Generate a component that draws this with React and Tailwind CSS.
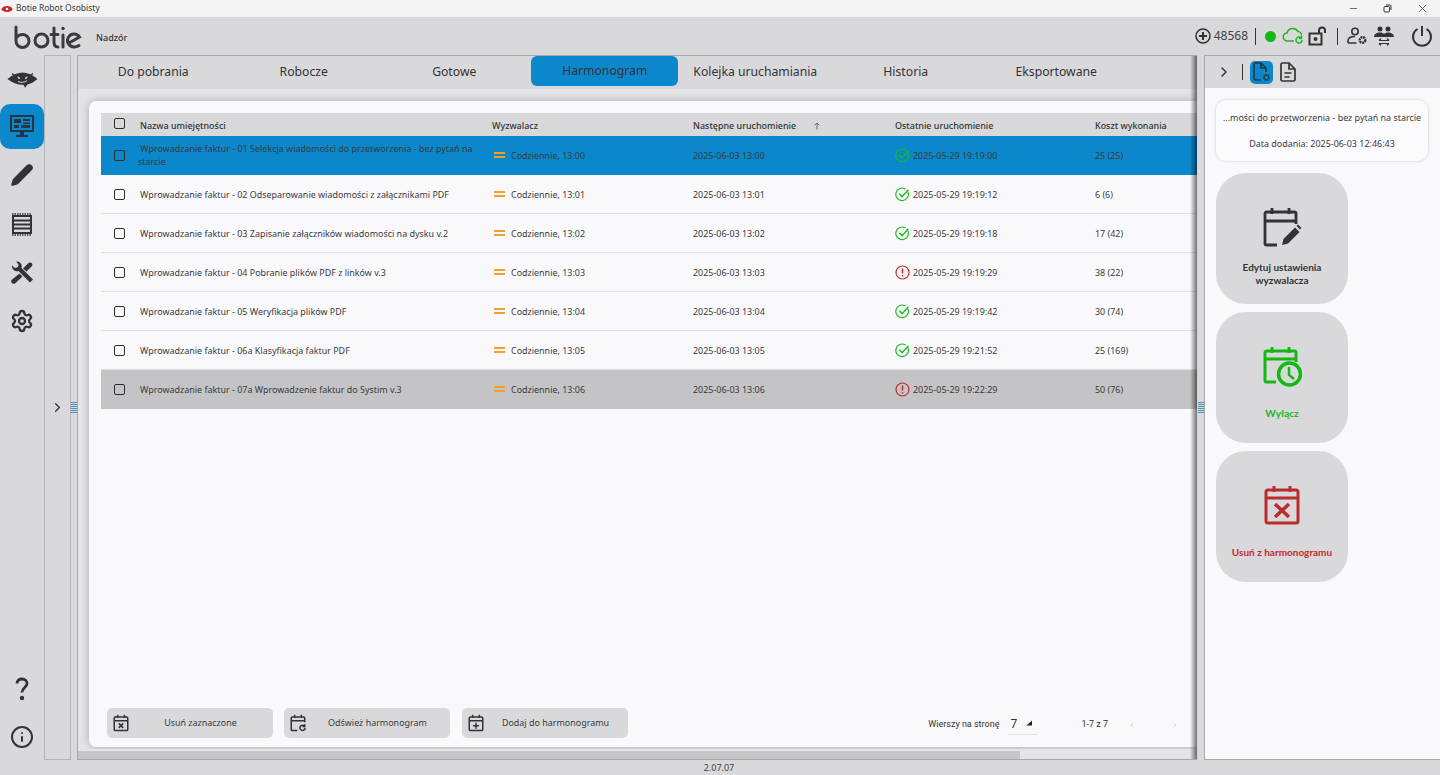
import React from "react";
import { ChevronRight, ChevronLeft, Minus, X, Settings, Info, Pencil } from "lucide-react";

const rows = [
  { name: "Wprowadzanie faktur - 01 Selekcja wiadomości do przetworzenia - bez pytań na starcie", time: "13:00", last: "2025-05-29 19:19:00", ok: true, cost: "25 (25)", state: "active" },
  { name: "Wprowadzanie faktur - 02 Odseparowanie wiadomości z załącznikami PDF", time: "13:01", last: "2025-05-29 19:19:12", ok: true, cost: "6 (6)" },
  { name: "Wprowadzanie faktur - 03 Zapisanie załączników wiadomości na dysku v.2", time: "13:02", last: "2025-05-29 19:19:18", ok: true, cost: "17 (42)" },
  { name: "Wprowadzanie faktur - 04 Pobranie plików PDF z linków v.3", time: "13:03", last: "2025-05-29 19:19:29", ok: false, cost: "38 (22)" },
  { name: "Wprowadzanie faktur - 05 Weryfikacja plików PDF", time: "13:04", last: "2025-05-29 19:19:42", ok: true, cost: "30 (74)" },
  { name: "Wprowadzanie faktur - 06a Klasyfikacja faktur PDF", time: "13:05", last: "2025-05-29 19:21:52", ok: true, cost: "25 (169)" },
  { name: "Wprowadzanie faktur - 07a Wprowadzenie faktur do Systim v.3", time: "13:06", last: "2025-05-29 19:22:29", ok: false, cost: "50 (76)", state: "muted" },
];

const tabs = ["Do pobrania", "Robocze", "Gotowe", "Harmonogram", "Kolejka uruchamiania", "Historia", "Eksportowane"];

function Logo() {
  return (
    <svg width="68" height="24" viewBox="0 0 68 24" fill="none" stroke="#3b3b3d" strokeWidth="3" strokeLinecap="round">
      <path d="M2 2v14a6.500 6.500 0 1 0 6.500-6.500c-2.500 0-4.500 1-6 3" />
      <circle cx="27.500" cy="15.500" r="6.500" />
      <path d="M40 3v14c0 3 1.500 5 4 5M37 9.500h7" />
      <path d="M49 10v12" />
      <circle cx="49" cy="3.500" r="1.300" fill="#3b3b3d" strokeWidth="1" />
      <path d="M65 20.500c-1.500 1-3 1.500-5 1.500a6.500 6.500 0 1 1 5.500-10L55 18" />
    </svg>
  );
}

function Eye() {
  return (
    <svg width="31" height="17" viewBox="0 0 31 17">
      <path d="M.5 8C6 3.500 11 1.500 15.500 1.500S25 3.500 30.500 8c-3.500 3-7 5-10 5.500L18 16.800l-1.500-3C10.500 14 5.500 12 .5 8Z" fill="#333335" />
      <path d="M5 2.500 7.500 4.500M26 2.500 23.500 4.500" stroke="#333335" strokeWidth="1.500" />
      <path d="M10.500 5.500a2.500 2.500 0 0 1 2.500 2.500c-1 0-2.500-.5-2.500-2.500ZM20.500 5.500A2.500 2.500 0 0 0 18 8c1 0 2.500-.5 2.500-2.500Z" fill="#d9d9db" />
      <path d="M11 10.500c3 1.500 6 1 9-.8" stroke="#d9d9db" strokeWidth="1" fill="none" />
    </svg>
  );
}

function MonitorIcon() {
  return (
    <svg width="26" height="23" viewBox="0 0 26 23" fill="#28343f">
      <path d="M1 0h24v17H1V0Zm2 2v13h20V2H3Z" />
      <path d="M5 4h7v4H5zM14 4h7v2h-7zM5 10h5v3H5zM12 10h9v3h-9zM14 7.500h7V9h-7z" />
      <path d="M11 17h4v3h-4zM7 20h12v2H7z" />
    </svg>
  );
}

function ListIcon() {
  return (
    <svg width="22" height="23" viewBox="0 0 22 23" fill="none" stroke="#333335">
      <path d="M1 1h20M1 22h20" strokeWidth="1.500" strokeDasharray="1.500 1" />
      <rect x="2" y="3" width="18" height="17" strokeWidth="2" />
      <path d="M2 7.500h18M2 11.500h18M2 15.500h18" strokeWidth="2" />
    </svg>
  );
}

function ToolsIcon() {
  return (
    <svg width="24" height="24" viewBox="0 0 24 24" fill="#333335">
      <path d="M6 1.500a5 5 0 0 1 5.500 6.500L23 19.500 20 22.500 8.500 11A5 5 0 0 1 2 5.500L5 8l3-1 .5-2.500z" />
      <path d="M13 8.500 19 2.500l3 .5.500 2.500-6 6zM9.500 13.500l3 3L5 23.500c-1 .5-2 .5-3-.5s-1-2-.5-3z" />
    </svg>
  );
}

function QuestionIcon() {
  return (
    <svg width="14" height="24" viewBox="0 0 14 24" fill="none">
      <path d="M2 6.500C2 3.500 4.200 2 7 2s5 1.700 5 4.500c0 4-5 4-5 9" stroke="#333335" strokeWidth="2.800" />
      <circle cx="7" cy="21" r="2.200" fill="#333335" />
    </svg>
  );
}

// calendar base shared by the schedule icons
function Calendar({ size = 24, color = "#333335", sw = 2, open = false, children }) {
  return (
    <svg width={size} height={size} viewBox="0 0 24 24" fill="none" stroke={color} strokeWidth={sw}>
      {open ? (
        <path d="M11 22H4.500A1.500 1.500 0 0 1 3 20.500V5.500A1.500 1.500 0 0 1 4.500 4h15A1.500 1.500 0 0 1 21 5.500V11" />
      ) : (
        <rect x="3" y="4" width="18" height="18" rx="1.500" />
      )}
      <path d="M3 9h18M7.500 1v4M16.500 1v4" />
      {children}
    </svg>
  );
}

function CheckCircle() {
  return (
    <svg width="15" height="15" viewBox="0 0 15 15" fill="none" stroke="#1fb81f" strokeWidth="1.200">
      <path d="M12.900 4.800A6.300 6.300 0 1 1 10.500 2" />
      <path d="m4.300 6.800 2.800 3 6.300-7" strokeWidth="1.400" />
    </svg>
  );
}

function ErrorCircle() {
  return (
    <svg width="15" height="15" viewBox="0 0 15 15" fill="none" stroke="#c22b2b" strokeWidth="1.200">
      <circle cx="7.500" cy="7.500" r="6.500" />
      <path d="M7.500 3.500v5M7.500 10v1.500" strokeWidth="1.500" />
    </svg>
  );
}

function Checkbox() {
  return <span className="block w-[11px] h-[11px] rounded-[2px] border-[1.5px] border-[#2d2d2f]" />;
}

function Grip() {
  return (
    <div className="flex flex-col gap-px w-[6px]">
      {[0, 1, 2, 3, 4, 5].map((i) => (
        <span key={i} className="block h-px bg-[#4d93ad]" />
      ))}
    </div>
  );
}

function Row({ row }) {
  const bg =
    row.state === "active"
      ? "bg-[#0b87cb] border-transparent"
      : row.state === "muted"
        ? "bg-[#c4c4c6] border-transparent"
        : "border-[#dfdfe2]";
  return (
    <div className={`grid grid-cols-[39px_352px_201px_202px_200px_1fr] items-center h-[39px] border-b text-[#3a3a3c] ${bg}`}>
      <div className="pl-[13px]">
        <Checkbox />
      </div>
      {row.state === "active" ? (
        <div className="pr-[15px] leading-[13px] -ml-0.5">&nbsp;{row.name}</div>
      ) : (
        <div className="pr-[15px] leading-[13px] pt-px">{row.name}</div>
      )}
      <div className="flex items-center gap-[6px] pl-[2px]">
        <span className="flex flex-col gap-[2px] w-[11px]">
          <span className="block h-[2px] bg-[#f0a02c]" />
          <span className="block h-[2px] bg-[#f0a02c]" />
        </span>
        <span className="pt-px">Codziennie, {row.time}</span>
      </div>
      <div className="pt-px">2025-06-03 {row.time}</div>
      <div className="flex items-center gap-[3px]">
        {row.ok ? <CheckCircle /> : <ErrorCircle />}
        <span className="pt-px">{row.last}</span>
      </div>
      <div className="pt-px">{row.cost}</div>
    </div>
  );
}

function FooterButton({ icon, label }) {
  return (
    <button className="flex items-center w-[166px] h-[30px] rounded-[5px] bg-[#d9d9db] pl-[5px] pr-[2px] text-[#3a3a3c]">
      {icon}
      <span className="flex-1 text-center">{label}</span>
    </button>
  );
}

function Tile({ icon, label, color }) {
  return (
    <button className="flex flex-col items-center w-[132px] h-[131px] rounded-[30px] bg-[#d9d9db]">
      <div className="h-[80px] pt-[34px]">{icon}</div>
      <div className={`mt-[8px] w-[120px] h-[26px] flex items-center justify-center text-center text-[10px] leading-[13px] font-bold font-['Lato',sans-serif] ${color}`}>{label}</div>
    </button>
  );
}

export default function App() {
  return (
    <div className="h-[775px] w-[1440px] overflow-hidden flex flex-col bg-[#d9d9db] text-[#333335] font-['Noto_Sans',sans-serif]">
      {/* title bar */}
      <div className="h-[17px] bg-[#f4f4f4] flex items-center text-[8.500px] text-[#3a3a3a] shrink-0">
        <svg width="12" height="8" viewBox="0 0 12 8" className="ml-px">
          <ellipse cx="6" cy="4" rx="5.500" ry="3" fill="#c9262c" />
          <circle cx="6" cy="4" r="1.300" fill="#fff" />
        </svg>
        <span className="ml-[3px]">Botie Robot Osobisty</span>
        <div className="ml-auto flex items-center text-[#333]">
          <span className="w-[34px] flex justify-center"><Minus size={11} strokeWidth={1.500} /></span>
          <span className="w-[34px] flex justify-center">
            <svg width="9" height="9" viewBox="0 0 9 9" fill="none" stroke="#333" strokeWidth="1">
              <rect x="1" y="2.500" width="5.500" height="5.500" rx="1" />
              <path d="M3 1h4a1 1 0 0 1 1 1v4" />
            </svg>
          </span>
          <span className="w-[36px] flex justify-center"><X size={13} strokeWidth={1.300} /></span>
        </div>
      </div>

      {/* top bar */}
      <div className="h-[38px] flex items-center shrink-0 relative">
        <div className="pl-[14px] pt-px"><Logo /></div>
        <span className="ml-[14px] pt-[4px] text-[9px] font-medium">Nadzór</span>
        <div className="ml-auto flex items-center pr-[7px]">
          <svg width="16" height="16" viewBox="0 0 16 16" fill="none" stroke="#333335" strokeWidth="1.500">
            <circle cx="8" cy="8" r="7" />
            <path d="M8 4v8M4 8h8" strokeWidth="2" />
          </svg>
          <span className="ml-[3px] text-[12px] text-[#444]">48568</span>
          <span className="ml-[7px] w-px h-[17px] bg-[#333]" />
          <span className="ml-[9px] w-[11px] h-[11px] rounded-full bg-[#14b814]" />
          <svg className="ml-[6px]" width="22" height="18" viewBox="0 0 22 18" fill="none" stroke="#1fb81f" strokeWidth="1.500">
            <path d="M12 14H5.500a4 4 0 0 1-.5-8 6 6 0 0 1 11-1.500c2 0 3.500 2 3.500 4" />
            <path d="M20 13a3 3 0 1 1-1-2.200M19.500 9v2.500H17" />
          </svg>
          <svg className="ml-[4px]" width="20" height="20" viewBox="0 0 20 20" fill="none" stroke="#333335" strokeWidth="2">
            <rect x="1.500" y="7.500" width="12" height="11" />
            <circle cx="7.500" cy="13" r="1" fill="#333335" />
            <path d="M11 7V4.500a3 3 0 0 1 6 0V7" />
          </svg>
          <span className="ml-[9px] w-px h-[17px] bg-[#333]" />
          <svg className="ml-[9px]" width="20" height="18" viewBox="0 0 20 18" fill="none" stroke="#333335" strokeWidth="1.600">
            <circle cx="8" cy="4.500" r="3.200" />
            <path d="M1 16v-2C1 11 3.500 9.500 8 9.500M1 16h8.500" />
            <circle cx="15.500" cy="13" r="2.800" strokeWidth="2.400" strokeDasharray="2 .7" />
          </svg>
          <svg className="ml-[7px]" width="20" height="20" viewBox="0 0 20 20" fill="#333335">
            <circle cx="6" cy="3" r="2.500" />
            <circle cx="14" cy="3" r="2.500" />
            <path d="M0 11c0-3 2.500-4.500 6-4.500 2 0 3 .5 4 1.500 1-1 2.500-1.500 4-1.500 3 0 6 1.500 6 4.500H0Z" />
            <path d="M5 14.500h10M5 14.500l2-2M15 14.500l-2-2M5 17.500h10M5 17.500l2 2M15 17.500l-2 2" stroke="#333335" strokeWidth="1.100" fill="none" />
          </svg>
          <svg className="ml-[17px]" width="22" height="22" viewBox="0 0 22 22" fill="none" stroke="#333335" strokeWidth="2">
            <path d="M11 1v10M6.500 4a9 9 0 1 0 9 0" />
          </svg>
        </div>
      </div>

      {/* workspace */}
      <div className="h-[705px] flex shrink-0">
        {/* nav rail */}
        <div className="w-[44px] flex flex-col items-center shrink-0 pt-[11px]">
          <div className="h-[26px] flex items-center"><Eye /></div>
          <div className="mt-[12px] w-[44px] h-[45px] rounded-[10px] bg-[#0b87cb] flex items-center justify-center"><MonitorIcon /></div>
          <div className="mt-[14px] h-[24px] flex items-center"><Pencil size={24} fill="#333335" stroke="#333335" strokeWidth={1.500} /></div>
          <div className="mt-[25px] h-[24px] flex items-center"><ListIcon /></div>
          <div className="mt-[24px] h-[24px] flex items-center"><ToolsIcon /></div>
          <div className="mt-[25px] h-[24px] flex items-center"><Settings size={24} strokeWidth={2.300} /></div>
          <div className="mt-auto h-[24px] flex items-center"><QuestionIcon /></div>
          <div className="mt-[24px] mb-[11px] h-[24px] flex items-center"><Info size={24} strokeWidth={2} /></div>
        </div>

        {/* collapsed side panel */}
        <div className="w-[27px] border border-[#b4b4b6] flex items-center justify-center shrink-0">
          <ChevronRight size={15} strokeWidth={2} />
        </div>
        <div className="w-[6px] flex items-center justify-center shrink-0"><Grip /></div>

        {/* main panel */}
        <div className="relative w-[1120px] shrink-0 overflow-hidden border-l border-b border-t border-[#a8a8aa] flex flex-col bg-[#e2e2e4]">
          <div className="h-[33px] bg-[#d9d9db] flex items-center shrink-0">
            {tabs.map((t) => (
              <div key={t} className="w-[150.500px] h-[33px] flex items-center justify-center text-[12.200px]">
                {t === "Harmonogram" ? (
                  <span className="flex items-center justify-center w-[147px] h-[30px] -mt-[3px] rounded-[6px] bg-[#0b87cb]">{t}</span>
                ) : (
                  t
                )}
              </div>
            ))}
          </div>

          <div className="flex-1 min-h-0 pl-[11px] pt-[12px] pb-[2px] bg-[#e4e4e6]">
            <div className="h-full bg-[#f9f9fc] rounded-l-[7px] shadow-[0_0_8px_rgba(0,0,0,0.25)] flex flex-col pl-[12px] pt-[12px] text-[8.950px]">
              {/* table head */}
              <div className="grid grid-cols-[39px_352px_201px_202px_200px_1fr] items-center h-[23px] bg-[#d9d9db] font-medium text-[#333335] shrink-0">
                <div className="pl-[13px] -mt-[3px]"><Checkbox /></div>
                <div className="pt-[3px]">Nazwa umiejętności</div>
                <div className="pt-[3px]">Wyzwalacz</div>
                <div className="pt-[3px] flex items-center">
                  Następne uruchomienie
                  <svg className="ml-[17px]" width="8" height="8" viewBox="0 0 8 8" fill="none" stroke="#555" strokeWidth="0.800">
                    <path d="M4 7.500V1M1.500 3.500 4 1l2.500 2.500" />
                  </svg>
                </div>
                <div className="pt-[3px]">Ostatnie uruchomienie</div>
                <div className="pt-[3px]">Koszt wykonania</div>
              </div>
              {rows.map((r) => (
                <Row key={r.name} row={r} />
              ))}

              {/* bottom actions */}
              <div className="mt-auto mb-[9px] h-[30px] flex items-center pl-[6px] shrink-0">
                <FooterButton
                  label="Usuń zaznaczone"
                  icon={
                    <Calendar size={18}>
                      <path d="m9 12.500 6 6M15 12.500l-6 6" />
                    </Calendar>
                  }
                />
                <span className="w-[11px]" />
                <FooterButton
                  label="Odśwież harmonogram"
                  icon={
                    <Calendar size={18} open>
                      <path d="M21.500 18.500a3.500 3.500 0 1 1-1-2.500M21 13.500V16.500h-3" />
                    </Calendar>
                  }
                />
                <span className="w-[12px]" />
                <FooterButton
                  label="Dodaj do harmonogramu"
                  icon={
                    <Calendar size={18}>
                      <path d="M12 11.500v8M8 15.500h8" />
                    </Calendar>
                  }
                />
                <div className="ml-auto flex items-center font-['Roboto',sans-serif] text-[9px] text-[#333335]">
                  <span className="pt-[3px]">Wierszy na stronę</span>
                  <div className="ml-[9px] w-[29px] h-[24px] border-b border-[#e2e2e5] flex items-center justify-between pr-[5px] pt-[3px] text-[12px]">
                    <span className="pl-[2px]">7</span>
                    <svg width="6" height="6" viewBox="0 0 6 6" className="-mt-[3px]"><path d="M6 0.500V5.500H0.500Z" fill="#222" /></svg>
                  </div>
                  <span className="ml-[44px] pt-[3px]">1-7 z 7</span>
                  <ChevronLeft className="ml-[20px] mt-[3px] text-[#c4c4c6]" size={8} strokeWidth={2} />
                  <ChevronRight className="ml-[35px] mt-[3px] mr-[18px] text-[#c4c4c6]" size={8} strokeWidth={2} />
                </div>
              </div>
            </div>
          </div>

          {/* horizontal scrollbar */}
          <div className="h-[10px] pt-[2px] bg-[#e4e4e6] shrink-0">
            <div className="h-[8px] w-[942px] bg-[#c6c6c8]" />
          </div>

          {/* shadow thrown by the detail panel */}
          <div className="absolute top-0 bottom-0 right-0 w-[7px] bg-gradient-to-r from-transparent to-[rgba(0,0,0,0.55)]" />
        </div>

        <div className="w-[7px] flex items-center justify-center shrink-0"><Grip /></div>

        {/* detail panel */}
        <div className="flex-1 border-l border-b border-t border-[#a8a8aa] flex flex-col bg-[#f9f9fc]">
          <div className="h-[32px] bg-[#d9d9db] flex items-center shrink-0 pl-[11px]">
            <ChevronRight size={16} strokeWidth={2.200} />
            <span className="ml-[10px] w-px h-[16px] bg-[#333]" />
            <span className="ml-[7px] w-[23px] h-[23px] rounded-[5px] bg-[#0b87cb] flex items-center justify-center">
              <svg width="19" height="20" viewBox="0 0 19 20" fill="none" stroke="#2a3640" strokeWidth="1.700">
                <path d="M9 18H3.500A1.500 1.500 0 0 1 2 16.500v-14A1.500 1.500 0 0 1 3.500 1H9l5 5v4" />
                <path d="M9 1v5h5" />
                <circle cx="14.500" cy="15.500" r="2.500" strokeWidth="2" strokeDasharray="1.600 .5" />
              </svg>
            </span>
            <svg className="ml-[6px]" width="18" height="20" viewBox="0 0 18 20" fill="none" stroke="#333335" strokeWidth="1.700">
              <path d="M10 1H3.500A1.500 1.500 0 0 0 2 2.500v15A1.500 1.500 0 0 0 3.500 19h11a1.500 1.500 0 0 0 1.500-1.500V7l-6-6Z" />
              <path d="M10 1v6h6M5.500 11h7M5.500 15h5" />
            </svg>
          </div>
          <div className="pl-[11px] pt-[12px] flex flex-col">
            <div className="w-[212px] h-[61px] rounded-[10px] bg-[#fbfbfd] shadow-[0_0_3px_rgba(0,0,0,0.2)] flex flex-col items-center pt-[11px] text-[8.950px] text-[#3a3a3c]">
              <div className="leading-[14px]">...mości do przetworzenia - bez pytań na starcie</div>
              <div className="mt-[12px] leading-[14px]">Data dodania: 2025-06-03 12:46:43</div>
            </div>
            <div className="mt-[12px] flex flex-col gap-[8px]">
              <Tile
                label="Edytuj ustawienia wyzwalacza"
                color="text-[#333335] px-[10px]"
                icon={
                  <svg width="40" height="40" viewBox="0 0 40 40" fill="none" stroke="#333335" strokeWidth="2.800">
                    <path d="M15 38H4.500A1.500 1.500 0 0 1 3 36.500V6.500A1.500 1.500 0 0 1 4.500 5h28A1.500 1.500 0 0 1 34 6.500V17" />
                    <path d="M3 14h31M10 1v6M27 1v6" />
                    <path d="m20 38 1.500-6L33 20.500l4.500 4.500L26 36.500z" fill="#333335" stroke="none" />
                    <path d="m34.500 19 1.500-1.500 3.500 3.500-1.500 1.500z" fill="#333335" stroke="none" />
                  </svg>
                }
              />
              <Tile
                label="Wyłącz"
                color="text-[#1fb81f]"
                icon={
                  <svg width="40" height="42" viewBox="0 0 40 42" fill="none" stroke="#14b814" strokeWidth="3">
                    <path d="M14 36H4.500A1.500 1.500 0 0 1 3 34.500V6.500A1.500 1.500 0 0 1 4.500 5h28A1.500 1.500 0 0 1 34 6.500V16" />
                    <path d="M3 13h31M10 1v6M27 1v6" />
                    <circle cx="27.500" cy="28" r="11" strokeWidth="3.500" />
                    <path d="M27 21v8l5 4" strokeWidth="2.500" />
                  </svg>
                }
              />
              <Tile
                label="Usuń z harmonogramu"
                color="text-[#c22b2b]"
                icon={
                  <svg width="36" height="40" viewBox="0 0 36 40" fill="none" stroke="#bd2c2c" strokeWidth="3">
                    <rect x="2" y="5" width="32" height="33" rx="2" />
                    <path d="M2 13h32M10 1v6M26 1v6" />
                    <path d="m11 19 14 13M25 19 11 32" strokeWidth="3.500" />
                  </svg>
                }
              />
            </div>
          </div>
        </div>
      </div>

      {/* version */}
      <div className="h-[15px] flex items-center justify-center text-[9px] text-[#444] shrink-0">
        <span className="-ml-[2px]">2.07.07</span>
      </div>
    </div>
  );
}
